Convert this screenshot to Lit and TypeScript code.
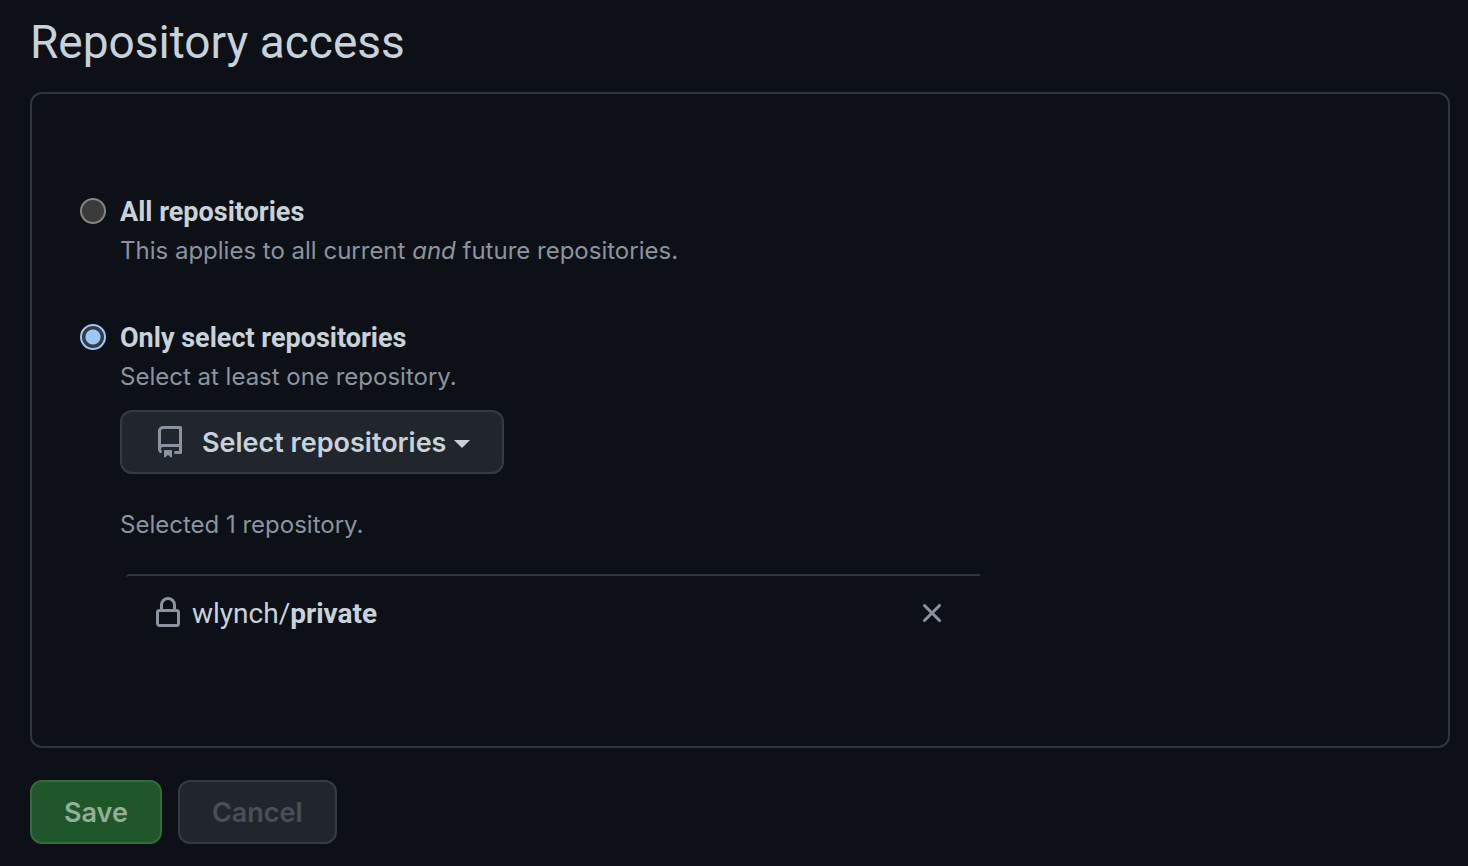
import { LitElement, html, css } from "lit";
import { customElement, state } from "lit/decorators.js";

@customElement("app-root")
export class AppRoot extends LitElement {
  @state() private scope: "all" | "selected" = "selected";
  @state() private repos = [{ owner: "wlynch", name: "private" }];

  static styles = css`
    :host {
      display: block;
      box-sizing: border-box;
      min-height: 100vh;
      padding: 12px 18px 22px 30px;
      background: #0d1117;
      color: #c9d1d9;
      font-family: Inter, "Liberation Sans", sans-serif;
      font-size: 27px;
    }
    * { box-sizing: border-box; }
    h1 { margin: 0 0 20px; font-family: Roboto, sans-serif; font-size: 46px; line-height: 60px; font-weight: 400; }
    .panel {
      margin: 0 0 32px;
      padding: 95px 48px 96px;
      border: 2px solid #30363d;
      border-radius: 12px;
    }
    .option { display: grid; grid-template-columns: 26px 1fr; column-gap: 14px; }
    .option + .option { margin-top: 46px; }
    .option > .radio { margin: 9px 0 0; }
    .radio {
      appearance: none;
      width: 26px;
      height: 26px;
      border: 2px solid #858585;
      border-radius: 50%;
      background: #3b3b3b;
    }
    .radio:checked {
      border-color: #99c8ff;
      background: radial-gradient(circle, #99c8ff 7px, #3b3b3b 8px);
    }
    .title { display: block; padding-top: 2px; font-family: Roboto, sans-serif; line-height: 42px; font-weight: 700; }
    .note { margin: 0; color: #8b949e; font-size: 24px; line-height: 36px; }
    .body { min-width: 0; }
    button { font: inherit; cursor: pointer; }
    .btn {
      height: 64px;
      padding: 0 32px;
      border: 2px solid #363b42;
      border-radius: 12px;
      background: #21262d;
      color: #c9d1d9;
      font-weight: 600;
    }
    .picker { display: flex; align-items: center; margin: 15px 0 33px; }
    .picker svg { fill: #8b949e; margin-right: 16px; }
    .caret { margin: 3px 0 0 8px; border: 8px solid transparent; border-top-color: currentColor; border-bottom: 0; }
    .repos { list-style: none; margin: 31px 0 0 6px; padding: 0; max-width: 854px; }
    .repo {
      display: flex;
      align-items: center;
      height: 76px;
      padding: 0 32px 0 26px;
      border-top: 2px solid #30363d;
      border-top-left-radius: 4px;
    }
    .repo svg { fill: #8b949e; }
    .path { flex: 1; margin-left: 8px; font-family: Roboto, sans-serif; font-size: 28px; }
    .remove { display: flex; padding: 0; border: 0; background: none; }
    .actions { display: flex; gap: 16px; }
    .save { border-color: #316b3c; background: #1f572a; color: #93af98; }
    .cancel { color: #484f58; }
  `;

  private remove(name: string) {
    this.repos = this.repos.filter((r) => r.name !== name);
  }

  render() {
    return html`
      <h1>Repository access</h1>
      <section class="panel">
        <div class="option">
          <input class="radio" type="radio" name="scope" id="all"
            .checked=${this.scope === "all"} @change=${() => (this.scope = "all")} />
          <div class="body">
            <label class="title" for="all">All repositories</label>
            <p class="note">This applies to all current <em>and</em> future repositories.</p>
          </div>
        </div>
        <div class="option">
          <input class="radio" type="radio" name="scope" id="selected"
            .checked=${this.scope === "selected"} @change=${() => (this.scope = "selected")} />
          <div class="body">
            <label class="title" for="selected">Only select repositories</label>
            <p class="note">Select at least one repository.</p>
            <button class="btn picker" type="button">
              <svg width="32" height="32" viewBox="0 0 16 16" aria-hidden="true"><path fill-rule="evenodd" d="M2 2.5A2.5 2.5 0 014.5 0h8.75a.75.75 0 01.75.75v12.5a.75.75 0 01-.75.75h-2.5a.75.75 0 110-1.5h1.75v-2h-8a1 1 0 00-.714 1.7.75.75 0 01-1.072 1.05A2.495 2.495 0 012 11.5v-9zm10.5-1V9h-8c-.356 0-.694.074-1 .208V2.5a1 1 0 011-1h8zM5 12.25v3.25a.25.25 0 00.4.2l1.45-1.087a.25.25 0 01.3 0L8.6 15.7a.25.25 0 00.4-.2v-3.25a.25.25 0 00-.25-.25h-3.5a.25.25 0 00-.25.25z"/></svg>
              Select repositories<span class="caret"></span>
            </button>
            <p class="note">Selected ${this.repos.length} repository.</p>
            <ul class="repos">
              ${this.repos.map((r) => html`
                <li class="repo">
                  <svg width="32" height="32" viewBox="0 0 16 16" aria-hidden="true"><path fill-rule="evenodd" d="M4 4v2h-.25A1.75 1.75 0 002 7.75v5.5c0 .966.784 1.75 1.75 1.75h8.5A1.75 1.75 0 0014 13.25v-5.5A1.75 1.75 0 0012.25 6H12V4a4 4 0 10-8 0zm6.5 2V4a2.5 2.5 0 10-5 0v2h5zM12 7.5h.25a.25.25 0 01.25.25v5.5a.25.25 0 01-.25.25h-8.5a.25.25 0 01-.25-.25v-5.5a.25.25 0 01.25-.25H12z"/></svg>
                  <span class="path">${r.owner}/<b>${r.name}</b></span>
                  <button class="remove" type="button" aria-label="Remove ${r.name}" @click=${() => this.remove(r.name)}>
                    <svg width="32" height="32" viewBox="0 0 16 16" aria-hidden="true"><path fill-rule="evenodd" d="M3.72 3.72a.75.75 0 011.06 0L8 6.94l3.22-3.22a.75.75 0 111.06 1.06L9.06 8l3.22 3.22a.75.75 0 11-1.06 1.06L8 9.06l-3.22 3.22a.75.75 0 01-1.06-1.06L6.94 8 3.72 4.78a.75.75 0 010-1.06z"/></svg>
                  </button>
                </li>`)}
            </ul>
          </div>
        </div>
      </section>
      <div class="actions">
        <button class="btn save" type="button">Save</button>
        <button class="btn cancel" type="button" disabled>Cancel</button>
      </div>
    `;
  }
}
